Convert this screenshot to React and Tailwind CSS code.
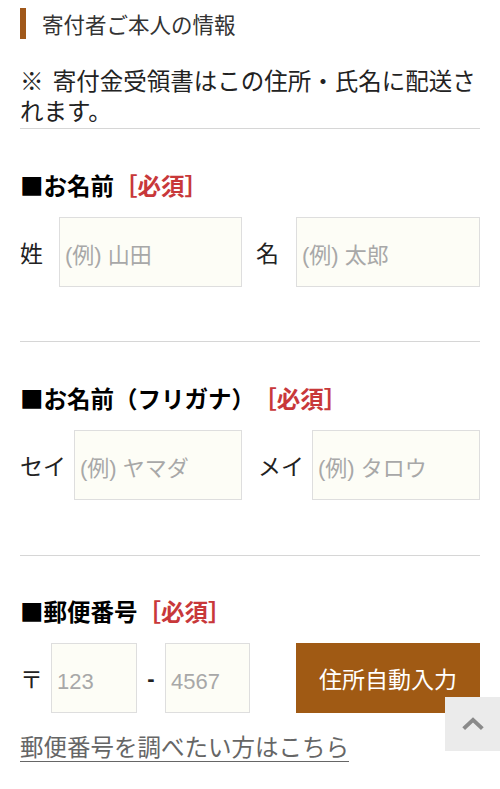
const jp = "font-['Noto_Sans_CJK_JP',sans-serif]";
const field =
  "h-[70px] border border-[#dedede] bg-[#fdfdf6] pl-[5px] pt-[8px] font-['Liberation_Sans','Noto_Sans_CJK_JP',sans-serif] text-[22px] text-[#333] outline-none placeholder:text-[#a8a8a8]";

const FieldHeading = ({ children, gap = "ml-0" }) => (
  <h3 className="text-[23.5px] font-bold leading-[30px] text-black">
    ■{children}
    <span className={`${gap} text-[#c8383a]`}>［必須］</span>
  </h3>
);

const App = () => {
  return (
    <div className={`relative min-h-screen bg-white text-[#222] ${jp}`}>
      <div className="px-5 pt-2">
        <div className="flex items-center">
          <span className="h-[31px] w-[6px] bg-[#a0581a]" />
          <h2 className="ml-4 text-[21.5px] leading-[31px] text-[#333]">
            寄付者ご本人の情報
          </h2>
        </div>

        <p className="mt-[26px] border-b border-[#d6d6d6] pb-[3px] text-[23.5px] leading-[30px] text-[#222] [word-spacing:4px]">
          ※ 寄付金受領書はこの住所・氏名に配送されます。
        </p>

        <section className="border-b border-[#d6d6d6] pb-[54px] pt-[41px]">
          <FieldHeading>お名前</FieldHeading>
          <div className="mt-[17px] flex items-center">
            <span className="w-[23px] text-[23px] leading-none">姓</span>
            <input className={`ml-4 w-[183px] ${field}`} placeholder="(例) 山田" />
            <span className="ml-[14px] w-[23px] text-[23px] leading-none">名</span>
            <input className={`ml-auto w-[184px] ${field}`} placeholder="(例) 太郎" />
          </div>
        </section>

        <section className="border-b border-[#d6d6d6] pb-[55px] pt-[41px]">
          <FieldHeading gap="ml-[10px]">お名前（フリガナ）</FieldHeading>
          <div className="mt-[17px] flex items-center">
            <span className="w-[46px] text-[23px] leading-none">セイ</span>
            <input className={`ml-2 w-[168px] ${field}`} placeholder="(例) ヤマダ" />
            <span className="ml-4 w-[46px] text-[23px] leading-none">メイ</span>
            <input className={`ml-auto w-[168px] ${field}`} placeholder="(例) タロウ" />
          </div>
        </section>

        <section className="pt-[40px]">
          <FieldHeading>郵便番号</FieldHeading>
          <div className="mt-[17px] flex items-center">
            <span className="w-[23px] text-[23px] leading-none">〒</span>
            <input className={`ml-2 w-[86px] ${field}`} placeholder="123" />
            <span className="w-[28px] text-center font-['Liberation_Sans',sans-serif] text-[22px] font-bold">-</span>
            <input className={`w-[85px] ${field}`} placeholder="4567" />
            <button
              type="button"
              className="ml-auto h-[70px] w-[184px] bg-[#a05a14] text-[23px] text-white"
            >
              住所自動入力
            </button>
          </div>
          <a
            href="#"
            className="mt-[18px] inline-block text-[23.5px] leading-[30px] text-[#666] underline decoration-1 underline-offset-[5px]"
          >
            郵便番号を調べたい方はこちら
          </a>
        </section>
      </div>

      <button
        type="button"
        aria-label="ページの先頭へ"
        className="fixed bottom-[38px] right-0 grid h-[54px] w-[55px] place-items-center bg-[#ebebeb]"
      >
        <svg viewBox="0 0 24 24" className="h-[28px] w-[28px] fill-none stroke-[#8a8a8a] stroke-[3.4]">
          <path d="M4 16 12 8.5 20 16" />
        </svg>
      </button>
    </div>
  );
};

export default App;
